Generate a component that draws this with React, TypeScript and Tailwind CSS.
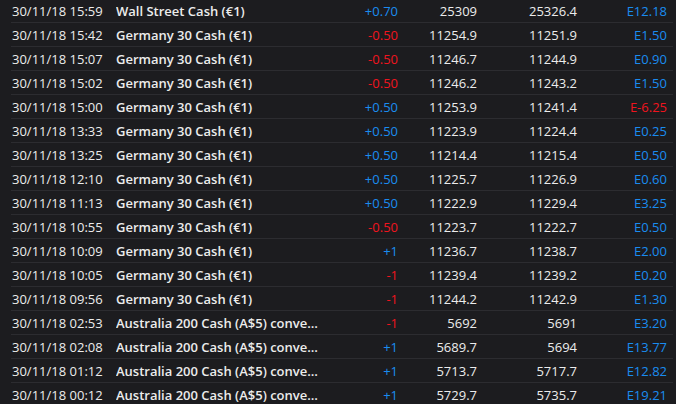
import React from "react";

type Row = [string, string, string, string, string, string];

const rows: Row[] = [
  ["30/11/18 15:59", "Wall Street Cash (€1)", "+0.70", "25309", "25326.4", "E12.18"],
  ["30/11/18 15:42", "Germany 30 Cash (€1)", "-0.50", "11254.9", "11251.9", "E1.50"],
  ["30/11/18 15:07", "Germany 30 Cash (€1)", "-0.50", "11246.7", "11244.9", "E0.90"],
  ["30/11/18 15:02", "Germany 30 Cash (€1)", "-0.50", "11246.2", "11243.2", "E1.50"],
  ["30/11/18 15:00", "Germany 30 Cash (€1)", "+0.50", "11253.9", "11241.4", "E-6.25"],
  ["30/11/18 13:33", "Germany 30 Cash (€1)", "+0.50", "11223.9", "11224.4", "E0.25"],
  ["30/11/18 13:25", "Germany 30 Cash (€1)", "+0.50", "11214.4", "11215.4", "E0.50"],
  ["30/11/18 12:10", "Germany 30 Cash (€1)", "+0.50", "11225.7", "11226.9", "E0.60"],
  ["30/11/18 11:13", "Germany 30 Cash (€1)", "+0.50", "11222.9", "11229.4", "E3.25"],
  ["30/11/18 10:55", "Germany 30 Cash (€1)", "-0.50", "11223.7", "11222.7", "E0.50"],
  ["30/11/18 10:09", "Germany 30 Cash (€1)", "+1", "11236.7", "11238.7", "E2.00"],
  ["30/11/18 10:05", "Germany 30 Cash (€1)", "-1", "11239.4", "11239.2", "E0.20"],
  ["30/11/18 09:56", "Germany 30 Cash (€1)", "-1", "11244.2", "11242.9", "E1.30"],
  ["30/11/18 02:53", "Australia 200 Cash (A$5) converted", "-1", "5692", "5691", "E3.20"],
  ["30/11/18 02:08", "Australia 200 Cash (A$5) converted", "+1", "5689.7", "5694", "E13.77"],
  ["30/11/18 01:12", "Australia 200 Cash (A$5) converted", "+1", "5713.7", "5717.7", "E12.82"],
  ["30/11/18 00:12", "Australia 200 Cash (A$5) converted", "+1", "5729.7", "5735.7", "E19.21"],
];

const BLUE = "text-[#1a8cf0]";
const RED = "text-[#f0141e]";

export default function App() {
  return (
    <div
      className="w-[676px] h-[404px] overflow-hidden bg-[#1c1c1f] text-[#ececec] text-[13px]"
      style={{ fontFamily: "'Open Sans', 'Liberation Sans', sans-serif" }}
    >
      <div className="-mt-px">
        {rows.map((r, i) => (
          <div
            key={i}
            className="ml-[11px] mr-[3px] h-[24px] border-b border-[#2c2c30] flex items-center pl-px leading-[18px]"
          >
            <div className="w-[104px] shrink-0 whitespace-nowrap">{r[0]}</div>
            <div className="w-[207px] shrink-0 truncate font-semibold">{r[1]}</div>
            <div className={`w-[75px] shrink-0 text-right ${r[2].startsWith("-") ? RED : BLUE}`}>{r[2]}</div>
            <div className="w-[79px] shrink-0 text-right">{r[3]}</div>
            <div className="w-[100px] shrink-0 text-right">{r[4]}</div>
            <div className={`w-[90px] shrink-0 text-right ${r[5].startsWith("E-") ? RED : BLUE}`}>{r[5]}</div>
          </div>
        ))}
      </div>
    </div>
  );
}
